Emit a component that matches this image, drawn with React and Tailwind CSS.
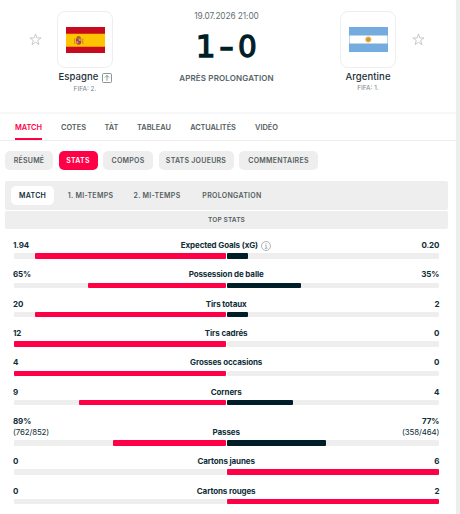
import React, { useState } from 'react'

const TABS = [
  { label: 'MATCH', style: 'w-[27px]' },
  { label: 'COTES', style: 'w-[25px]' },
  { label: 'TÀT', style: 'w-[13px]' },
  { label: 'TABLEAU', style: 'w-[34px]' },
  { label: 'ACTUALITÉS', style: 'w-[46px] tracking-[-0.1px]' },
  { label: 'VIDÉO', style: 'w-[23px]' },
]

const PILLS = [
  { label: 'RÉSUMÉ', style: 'w-12' },
  { label: 'STATS', style: 'w-[39px]' },
  { label: 'COMPOS', style: 'w-[50px]' },
  { label: 'STATS JOUEURS', style: 'w-[75px]' },
  { label: 'COMMENTAIRES', style: 'w-[79px]' },
]

const PERIODS = [
  { label: 'MATCH', style: 'w-[43px]' },
  { label: '1. MI-TEMPS', style: 'w-[59px]' },
  { label: '2. MI-TEMPS', style: 'w-[60px]' },
  { label: 'PROLONGATION', style: 'w-[76px]' },
]

const STATS = [
  { label: 'Expected Goals (xG)', home: '1.94', away: '0.20', homeBar: 90.2, awayBar: 9.8, info: true },
  { label: 'Possession de balle', home: '65%', away: '35%', homeBar: 65, awayBar: 35 },
  { label: 'Tirs totaux', home: '20', away: '2', homeBar: 90.2, awayBar: 9.8 },
  { label: 'Tirs cadrés', home: '12', away: '0', homeBar: 100, awayBar: 0 },
  { label: 'Grosses occasions', home: '4', away: '0', homeBar: 100, awayBar: 0 },
  { label: 'Corners', home: '9', away: '4', homeBar: 69.2, awayBar: 30.8 },
  { label: 'Passes', home: '89%', away: '77%', homeSub: '(762/852)', awaySub: '(358/464)', homeBar: 53.3, awayBar: 46.7 },
  { label: 'Cartons jaunes', home: '0', away: '6', homeBar: 0, awayBar: 100 },
  { label: 'Cartons rouges', home: '0', away: '2', homeBar: 0, awayBar: 100 },
]

const Star = () => (
  <svg className="w-[13px] h-[13px] shrink-0" viewBox="0 0 20 20" fill="none" stroke="#c0c4c6" strokeWidth="1.4">
    <path d="M10 1.5 12.1 7.6H18.6L13.4 11.5 15.3 17.9 10 14.1 4.7 17.9 6.6 11.5 1.4 7.6H7.9Z" />
  </svg>
)

const SpainFlag = () => (
  <svg className="w-[39px] h-[26px]" viewBox="0 0 39 26">
    <path fill="#c60b1e" d="M0 0h39v26H0z" />
    <path fill="#ffc400" d="M0 6.8h39v12.9H0z" />
    <path fill="#c98f35" d="M8 11.5h1.2v5.5H8zM16.2 11.5h1.2v5.5h-1.2z" />
    <path fill="#b5403a" d="M10 11.5h5.2v4.3q-.4 2-2.6 2t-2.6-2z" />
    <path fill="#c9a096" d="M12.7 12h2v2h-2zM10.5 14.3h2v2h-2z" />
    <path fill="#a0622a" d="M10.2 11.5q0-2 2.4-2.4 2.4.4 2.4 2.4z" />
    <circle cx="12.7" cy="14.2" r=".8" fill="#51527f" />
  </svg>
)

const ArgentinaFlag = () => (
  <svg className="w-[39px] h-[25px]" viewBox="0 0 39 25">
    <path fill="#74acdf" d="M0 0h39v25H0z" />
    <path fill="#fff" d="M.5 8.4h38v8.2H.5z" />
    <circle cx="19.3" cy="12.5" r="3" fill="#edba65" />
    <circle cx="19.3" cy="12.5" r="2.1" fill="#db9425" />
  </svg>
)

const ArrowBox = () => (
  <svg className="w-[10px] h-[10px] shrink-0" viewBox="0 0 10 10" fill="none" stroke="#6f7c80" strokeWidth="0.8">
    <rect x="0.5" y="0.5" width="9" height="9" rx="1" />
    <path d="M5 7.8V2.4M2.8 4.6 5 2.4l2.2 2.2" />
  </svg>
)

const InfoIcon = () => (
  <svg className="w-[10px] h-[10px] ml-[3.5px] shrink-0" viewBox="0 0 10 10" fill="none" stroke="#8d989c" strokeWidth="0.7">
    <circle cx="5" cy="5" r="4.5" />
    <path d="M4 4.2h1.2v3M3.7 7.3h2.8M4.7 2.6h.8" />
  </svg>
)

const Team = ({ name, rank, flag, icon, rankStyle }) => (
  <div className="w-[56px] flex flex-col items-center">
    <div className="w-[56px] h-[57px] border border-[#eeeeee] rounded-[8px] flex items-center justify-center">
      {flag}
    </div>
    <div className="mt-1 h-[11px] flex items-center gap-[3px] whitespace-nowrap text-[9.5px] font-medium text-[#1c3038] tracking-[0.1px]">
      {name}
      {icon}
    </div>
    <div className={`h-[10px] leading-[10px] text-[6.5px] text-[#7b8588] whitespace-nowrap ${rankStyle}`}>{rank}</div>
  </div>
)

const StatRow = ({ stat }) => (
  <div className="flex flex-col">
    <div className="flex items-end justify-between text-[8px] leading-[11px] font-bold text-[#0f2d37] tracking-[-0.12px]">
      <div className="w-[60px] -ml-px">
        <div>{stat.home}</div>
        {stat.homeSub && <div className="font-normal text-[7.9px]">{stat.homeSub}</div>}
      </div>
      <div className="flex items-center h-[11px] whitespace-nowrap">
        {stat.label}
        {stat.info && <InfoIcon />}
      </div>
      <div className="w-[60px] text-right">
        <div>{stat.away}</div>
        {stat.awaySub && <div className="font-normal text-[7.9px]">{stat.awaySub}</div>}
      </div>
    </div>
    <div className="flex gap-[1.3px] mt-[2.3px] h-[5.33px]">
      <div className="flex flex-1 justify-end bg-[#eeeeee] rounded-[1px]">
        <div className="bg-[#ff0046] rounded-[1px]" style={{ width: `${stat.homeBar}%` }} />
      </div>
      <div className="flex flex-1 bg-[#eeeeee] rounded-[1px]">
        <div
          className={`rounded-[1px] ${stat.awayBar > stat.homeBar ? 'bg-[#ff0046]' : 'bg-[#001e28]'}`}
          style={{ width: `${stat.awayBar}%` }}
        />
      </div>
    </div>
  </div>
)

const App = () => {
  const [tab, setTab] = useState('MATCH')
  const [pill, setPill] = useState('STATS')
  const [period, setPeriod] = useState('MATCH')

  return (
    <div className="w-[460px] h-[514px] overflow-hidden bg-white border-r-4 border-[#eeeeee] font-['Inter',sans-serif]">
      {/* Match header */}
      <header className="h-[114px] border-b-2 border-[#f8f8f8] pt-[11px] pl-[29px] flex items-start">
        <div className="h-[57px] flex items-center"><Star /></div>
        <div className="ml-[15px]">
          <Team name="Espagne" rank="FIFA: 2." rankStyle="mt-px" flag={<SpainFlag />} icon={<ArrowBox />} />
        </div>
        <div className="w-[227px] flex flex-col items-center">
          <div className="h-[10px] leading-[10px] text-[8.3px] text-[#636f73] tracking-[-0.08px]">19.07.2026 21:00</div>
          <div className="mt-[9px] h-8 flex items-center justify-center text-[31px] leading-8 text-[#001e28] font-['DejaVu_Sans',sans-serif] [-webkit-text-stroke:1.4px_#001e28]">
            <span className="w-[21px] text-center">1</span>
            <span className="w-[21px] text-center scale-x-130">-</span>
            <span className="w-[21px] text-center scale-x-95">0</span>
          </div>
          <div className="mt-[11px] h-[10px] leading-[10px] text-[8px] font-semibold text-[#55646a] tracking-[0.15px]">APRÈS PROLONGATION</div>
        </div>
        <Team name="Argentine" rank="FIFA: 1." flag={<ArgentinaFlag />} />
        <div className="h-[57px] ml-4 flex items-center"><Star /></div>
      </header>

      <nav className="h-[27px] border-b border-[#eeeeee] pl-[15px] flex gap-[19px] text-[7.4px] font-semibold">
        {TABS.map((t) => (
          <button
            key={t.label}
            onClick={() => setTab(t.label)}
            className={`h-[26px] pt-[3px] border-b-2 whitespace-nowrap flex justify-center items-center ${t.style} ${tab === t.label ? 'text-[#ff0046] border-[#ff0046]' : 'text-[#555e61] border-transparent'}`}
          >
            {t.label}
          </button>
        ))}
      </nav>

      <div className="mt-[10px] pl-[5px] flex gap-[5.5px] text-[7px] font-semibold tracking-[0.25px]">
        {PILLS.map((p) => (
          <button
            key={p.label}
            onClick={() => setPill(p.label)}
            className={`h-[19px] pt-[2px] rounded-[5px] whitespace-nowrap flex justify-center items-center ${p.style} ${pill === p.label ? 'bg-[#ff0046] text-white' : 'bg-[#eeeeee] text-[#555e61]'}`}
          >
            {p.label}
          </button>
        ))}
      </div>

      <div className="mt-[11px] ml-[5px] w-[443px]">
        <div className="h-[29px] px-[6px] rounded-[2px] bg-[#eeeeee] flex items-center gap-[7px] text-[7px] font-semibold tracking-[0.3px]">
          {PERIODS.map((p) => (
            <button
              key={p.label}
              onClick={() => setPeriod(p.label)}
              className={`h-[19px] pt-[2px] rounded-[5px] whitespace-nowrap flex justify-center items-center ${p.style} ${period === p.label ? 'bg-white text-[#0f2d37]' : 'text-[#555e61]'}`}
            >
              {p.label}
            </button>
          ))}
        </div>
        <div className="mt-px pt-[2px] h-[18px] rounded-[2px] bg-[#eeeeee] flex items-center justify-center text-[6.6px] font-semibold text-[#555e61] tracking-[0.1px]">
          TOP STATS
        </div>
      </div>

      <main className="mt-[11px] ml-[14px] w-[425.3px] flex flex-col gap-[10.7px]">
        {STATS.map((s) => (
          <StatRow key={s.label} stat={s} />
        ))}
      </main>
    </div>
  )
}

export default App
